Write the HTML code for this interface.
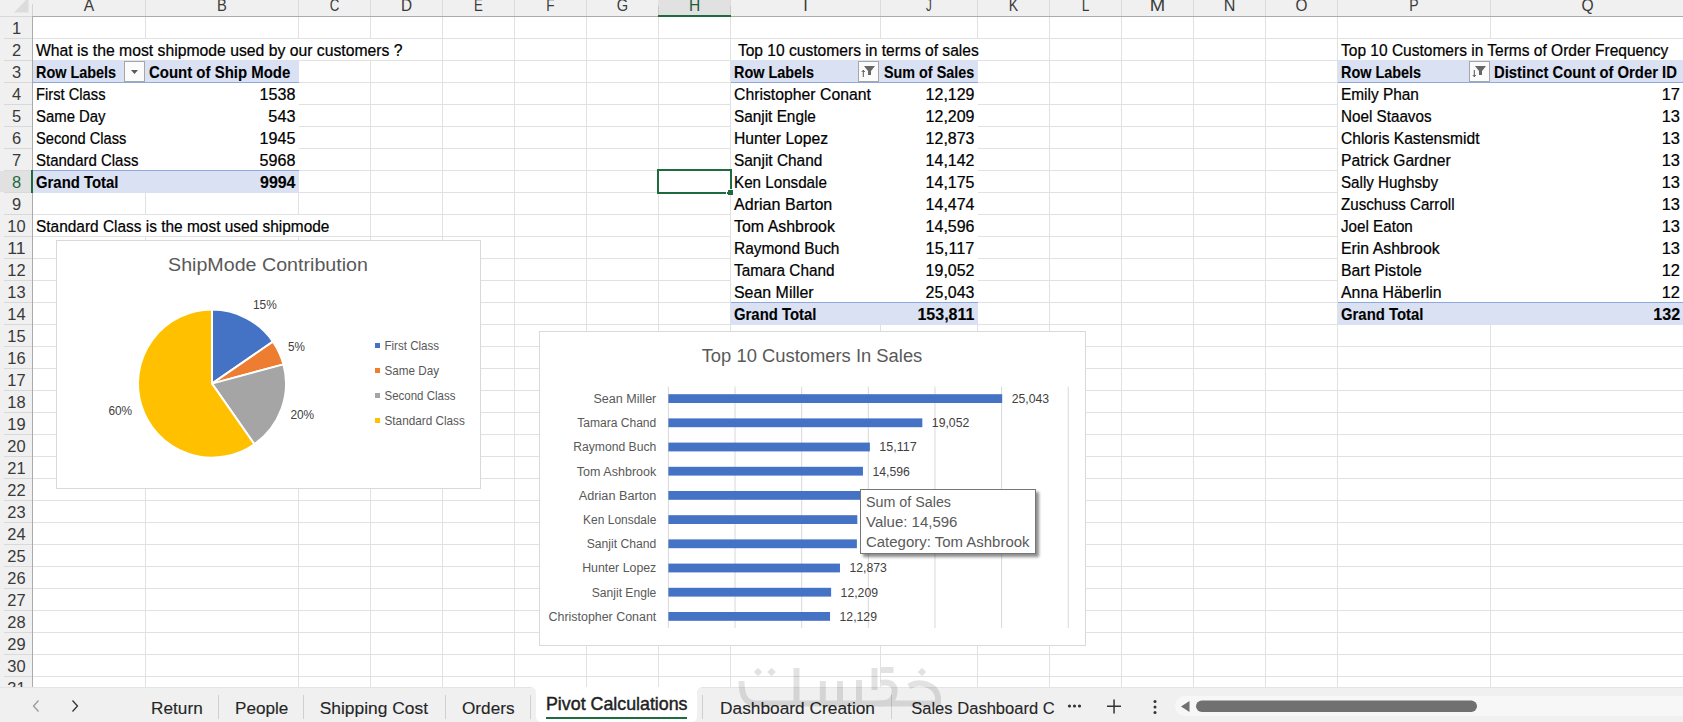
<!DOCTYPE html>
<html><head><meta charset="utf-8"><title>Pivot Calculations</title>
<style>html,body{margin:0;padding:0;width:1683px;height:722px;overflow:hidden;background:#fff;font-family:"Liberation Sans",sans-serif}</style>
</head><body><svg width="1683" height="722" viewBox="0 0 1683 722" style="display:block" font-family="Liberation Sans, sans-serif" xml:space="preserve"><rect x="0" y="0" width="1683" height="722" fill="#fff" /><rect x="145" y="17" width="1" height="670" fill="#e1e1e1" /><rect x="298" y="17" width="1" height="670" fill="#e1e1e1" /><rect x="370" y="17" width="1" height="670" fill="#e1e1e1" /><rect x="442" y="17" width="1" height="670" fill="#e1e1e1" /><rect x="514" y="17" width="1" height="670" fill="#e1e1e1" /><rect x="586" y="17" width="1" height="670" fill="#e1e1e1" /><rect x="658" y="17" width="1" height="670" fill="#e1e1e1" /><rect x="730" y="17" width="1" height="670" fill="#e1e1e1" /><rect x="880" y="17" width="1" height="670" fill="#e1e1e1" /><rect x="977" y="17" width="1" height="670" fill="#e1e1e1" /><rect x="1049" y="17" width="1" height="670" fill="#e1e1e1" /><rect x="1121" y="17" width="1" height="670" fill="#e1e1e1" /><rect x="1193" y="17" width="1" height="670" fill="#e1e1e1" /><rect x="1265" y="17" width="1" height="670" fill="#e1e1e1" /><rect x="1337" y="17" width="1" height="670" fill="#e1e1e1" /><rect x="1490" y="17" width="1" height="670" fill="#e1e1e1" /><rect x="33" y="38" width="1650" height="1" fill="#e1e1e1" /><rect x="33" y="60" width="1650" height="1" fill="#e1e1e1" /><rect x="33" y="82" width="1650" height="1" fill="#e1e1e1" /><rect x="33" y="104" width="1650" height="1" fill="#e1e1e1" /><rect x="33" y="126" width="1650" height="1" fill="#e1e1e1" /><rect x="33" y="148" width="1650" height="1" fill="#e1e1e1" /><rect x="33" y="170" width="1650" height="1" fill="#e1e1e1" /><rect x="33" y="192" width="1650" height="1" fill="#e1e1e1" /><rect x="33" y="214" width="1650" height="1" fill="#e1e1e1" /><rect x="33" y="236" width="1650" height="1" fill="#e1e1e1" /><rect x="33" y="258" width="1650" height="1" fill="#e1e1e1" /><rect x="33" y="280" width="1650" height="1" fill="#e1e1e1" /><rect x="33" y="302" width="1650" height="1" fill="#e1e1e1" /><rect x="33" y="324" width="1650" height="1" fill="#e1e1e1" /><rect x="33" y="346" width="1650" height="1" fill="#e1e1e1" /><rect x="33" y="368" width="1650" height="1" fill="#e1e1e1" /><rect x="33" y="390" width="1650" height="1" fill="#e1e1e1" /><rect x="33" y="412" width="1650" height="1" fill="#e1e1e1" /><rect x="33" y="434" width="1650" height="1" fill="#e1e1e1" /><rect x="33" y="456" width="1650" height="1" fill="#e1e1e1" /><rect x="33" y="478" width="1650" height="1" fill="#e1e1e1" /><rect x="33" y="500" width="1650" height="1" fill="#e1e1e1" /><rect x="33" y="522" width="1650" height="1" fill="#e1e1e1" /><rect x="33" y="544" width="1650" height="1" fill="#e1e1e1" /><rect x="33" y="566" width="1650" height="1" fill="#e1e1e1" /><rect x="33" y="588" width="1650" height="1" fill="#e1e1e1" /><rect x="33" y="610" width="1650" height="1" fill="#e1e1e1" /><rect x="33" y="632" width="1650" height="1" fill="#e1e1e1" /><rect x="33" y="654" width="1650" height="1" fill="#e1e1e1" /><rect x="33" y="676" width="1650" height="1" fill="#e1e1e1" /><rect x="33" y="39" width="409" height="21" fill="#fff" /><rect x="731" y="39" width="318" height="21" fill="#fff" /><rect x="1338" y="39" width="345" height="21" fill="#fff" /><rect x="33" y="215" width="337" height="21" fill="#fff" /><rect x="33" y="60" width="266" height="22" fill="#d9e1f2" /><rect x="33" y="82" width="266" height="1" fill="#8ea9db" /><rect x="33" y="83" width="266" height="87" fill="#fff" /><rect x="33" y="170" width="266" height="1" fill="#8ea9db" /><rect x="33" y="171" width="266" height="22" fill="#d9e1f2" /><rect x="731" y="60" width="247" height="22" fill="#d9e1f2" /><rect x="731" y="82" width="247" height="1" fill="#8ea9db" /><rect x="731" y="83" width="247" height="219" fill="#fff" /><rect x="731" y="302" width="247" height="1" fill="#8ea9db" /><rect x="731" y="303" width="247" height="22" fill="#d9e1f2" /><rect x="1338" y="60" width="345" height="22" fill="#d9e1f2" /><rect x="1338" y="82" width="345" height="1" fill="#8ea9db" /><rect x="1338" y="83" width="345" height="219" fill="#fff" /><rect x="1338" y="302" width="345" height="1" fill="#8ea9db" /><rect x="1338" y="303" width="345" height="22" fill="#d9e1f2" /><rect x="0" y="0" width="1683" height="16" fill="#f0f0f0" /><rect x="0" y="17" width="32" height="670" fill="#f0f0f0" /><rect x="145" y="0" width="1" height="16" fill="#dcdcdc" /><rect x="298" y="0" width="1" height="16" fill="#dcdcdc" /><rect x="370" y="0" width="1" height="16" fill="#dcdcdc" /><rect x="442" y="0" width="1" height="16" fill="#dcdcdc" /><rect x="514" y="0" width="1" height="16" fill="#dcdcdc" /><rect x="586" y="0" width="1" height="16" fill="#dcdcdc" /><rect x="658" y="0" width="1" height="16" fill="#dcdcdc" /><rect x="730" y="0" width="1" height="16" fill="#dcdcdc" /><rect x="880" y="0" width="1" height="16" fill="#dcdcdc" /><rect x="977" y="0" width="1" height="16" fill="#dcdcdc" /><rect x="1049" y="0" width="1" height="16" fill="#dcdcdc" /><rect x="1121" y="0" width="1" height="16" fill="#dcdcdc" /><rect x="1193" y="0" width="1" height="16" fill="#dcdcdc" /><rect x="1265" y="0" width="1" height="16" fill="#dcdcdc" /><rect x="1337" y="0" width="1" height="16" fill="#dcdcdc" /><rect x="1490" y="0" width="1" height="16" fill="#dcdcdc" /><rect x="658" y="0" width="72" height="15" fill="#e1e1e1" /><rect x="32" y="4" width="1" height="12" fill="#d4d4d4" /><rect x="658" y="6" width="1" height="10" fill="#c8c8c8" /><rect x="730" y="6" width="1" height="10" fill="#c8c8c8" /><rect x="32" y="16" width="1651" height="1" fill="#ababab" /><rect x="0" y="16" width="32" height="1" fill="#d8d8d8" /><rect x="33" y="15" width="0" height="0" fill="#000" /><rect x="658" y="15" width="73" height="2" fill="#1d6b3e" /><rect x="4" y="38" width="28" height="1" fill="#d9d9d9" /><rect x="4" y="60" width="28" height="1" fill="#d9d9d9" /><rect x="4" y="82" width="28" height="1" fill="#d9d9d9" /><rect x="4" y="104" width="28" height="1" fill="#d9d9d9" /><rect x="4" y="126" width="28" height="1" fill="#d9d9d9" /><rect x="4" y="148" width="28" height="1" fill="#d9d9d9" /><rect x="4" y="170" width="28" height="1" fill="#d9d9d9" /><rect x="4" y="192" width="28" height="1" fill="#d9d9d9" /><rect x="4" y="214" width="28" height="1" fill="#d9d9d9" /><rect x="4" y="236" width="28" height="1" fill="#d9d9d9" /><rect x="4" y="258" width="28" height="1" fill="#d9d9d9" /><rect x="4" y="280" width="28" height="1" fill="#d9d9d9" /><rect x="4" y="302" width="28" height="1" fill="#d9d9d9" /><rect x="4" y="324" width="28" height="1" fill="#d9d9d9" /><rect x="4" y="346" width="28" height="1" fill="#d9d9d9" /><rect x="4" y="368" width="28" height="1" fill="#d9d9d9" /><rect x="4" y="390" width="28" height="1" fill="#d9d9d9" /><rect x="4" y="412" width="28" height="1" fill="#d9d9d9" /><rect x="4" y="434" width="28" height="1" fill="#d9d9d9" /><rect x="4" y="456" width="28" height="1" fill="#d9d9d9" /><rect x="4" y="478" width="28" height="1" fill="#d9d9d9" /><rect x="4" y="500" width="28" height="1" fill="#d9d9d9" /><rect x="4" y="522" width="28" height="1" fill="#d9d9d9" /><rect x="4" y="544" width="28" height="1" fill="#d9d9d9" /><rect x="4" y="566" width="28" height="1" fill="#d9d9d9" /><rect x="4" y="588" width="28" height="1" fill="#d9d9d9" /><rect x="4" y="610" width="28" height="1" fill="#d9d9d9" /><rect x="4" y="632" width="28" height="1" fill="#d9d9d9" /><rect x="4" y="654" width="28" height="1" fill="#d9d9d9" /><rect x="4" y="676" width="28" height="1" fill="#d9d9d9" /><rect x="0" y="171" width="31" height="21" fill="#e1e1e1" /><rect x="32" y="0" width="1" height="0" fill="#000" /><rect x="32" y="17" width="1" height="670" fill="#ababab" /><rect x="31" y="170" width="2" height="23" fill="#1d6b3e" /><polygon points="14,12.5 28.5,12.5 28.5,0 26,0" fill="#dcdcdc"/><text x="89.00" y="11.00" font-size="15.82" fill="#3a3a3a"  text-anchor="middle" textLength="10.45" lengthAdjust="spacingAndGlyphs">A</text><text x="222.00" y="11.00" font-size="15.82" fill="#3a3a3a"  text-anchor="middle" textLength="9.83" lengthAdjust="spacingAndGlyphs">B</text><text x="334.50" y="11.00" font-size="15.82" fill="#3a3a3a"  text-anchor="middle" textLength="9.63" lengthAdjust="spacingAndGlyphs">C</text><text x="406.50" y="11.00" font-size="15.82" fill="#3a3a3a"  text-anchor="middle" textLength="11.11" lengthAdjust="spacingAndGlyphs">D</text><text x="478.50" y="11.00" font-size="15.82" fill="#3a3a3a"  text-anchor="middle" textLength="8.83" lengthAdjust="spacingAndGlyphs">E</text><text x="550.50" y="11.00" font-size="15.82" fill="#3a3a3a"  text-anchor="middle" textLength="8.30" lengthAdjust="spacingAndGlyphs">F</text><text x="622.50" y="11.00" font-size="15.82" fill="#3a3a3a"  text-anchor="middle" textLength="11.39" lengthAdjust="spacingAndGlyphs">G</text><text x="694.50" y="11.00" font-size="15.82" fill="#215a3a"  text-anchor="middle" textLength="11.25" lengthAdjust="spacingAndGlyphs">H</text><text x="805.50" y="11.00" font-size="15.82" fill="#3a3a3a"  text-anchor="middle" textLength="4.56" lengthAdjust="spacingAndGlyphs">I</text><text x="929.00" y="11.00" font-size="15.82" fill="#3a3a3a"  text-anchor="middle" textLength="5.76" lengthAdjust="spacingAndGlyphs">J</text><text x="1013.50" y="11.00" font-size="15.82" fill="#3a3a3a"  text-anchor="middle" textLength="9.38" lengthAdjust="spacingAndGlyphs">K</text><text x="1085.50" y="11.00" font-size="15.82" fill="#3a3a3a"  text-anchor="middle" textLength="7.60" lengthAdjust="spacingAndGlyphs">L</text><text x="1157.50" y="11.00" font-size="15.82" fill="#3a3a3a"  text-anchor="middle" textLength="15.44" lengthAdjust="spacingAndGlyphs">M</text><text x="1229.50" y="11.00" font-size="15.82" fill="#3a3a3a"  text-anchor="middle" textLength="11.66" lengthAdjust="spacingAndGlyphs">N</text><text x="1301.50" y="11.00" font-size="15.82" fill="#3a3a3a"  text-anchor="middle" textLength="11.96" lengthAdjust="spacingAndGlyphs">O</text><text x="1414.00" y="11.00" font-size="15.82" fill="#3a3a3a"  text-anchor="middle" textLength="9.34" lengthAdjust="spacingAndGlyphs">P</text><text x="1587.50" y="11.00" font-size="15.82" fill="#3a3a3a"  text-anchor="middle" textLength="12.16" lengthAdjust="spacingAndGlyphs">Q</text><text x="16.50" y="34.00" font-size="15.82" fill="#3a3a3a"  text-anchor="middle" textLength="9.15" lengthAdjust="spacingAndGlyphs">1</text><text x="16.50" y="56.00" font-size="15.82" fill="#3a3a3a"  text-anchor="middle" textLength="9.15" lengthAdjust="spacingAndGlyphs">2</text><text x="16.50" y="78.00" font-size="15.82" fill="#3a3a3a"  text-anchor="middle" textLength="9.15" lengthAdjust="spacingAndGlyphs">3</text><text x="16.50" y="100.00" font-size="15.82" fill="#3a3a3a"  text-anchor="middle" textLength="9.15" lengthAdjust="spacingAndGlyphs">4</text><text x="16.50" y="122.00" font-size="15.82" fill="#3a3a3a"  text-anchor="middle" textLength="9.15" lengthAdjust="spacingAndGlyphs">5</text><text x="16.50" y="144.00" font-size="15.82" fill="#3a3a3a"  text-anchor="middle" textLength="9.15" lengthAdjust="spacingAndGlyphs">6</text><text x="16.50" y="166.00" font-size="15.82" fill="#3a3a3a"  text-anchor="middle" textLength="9.15" lengthAdjust="spacingAndGlyphs">7</text><text x="16.50" y="188.00" font-size="15.82" fill="#1f6a3e"  text-anchor="middle" textLength="9.15" lengthAdjust="spacingAndGlyphs">8</text><text x="16.50" y="210.00" font-size="15.82" fill="#3a3a3a"  text-anchor="middle" textLength="9.15" lengthAdjust="spacingAndGlyphs">9</text><text x="16.50" y="232.00" font-size="15.82" fill="#3a3a3a"  text-anchor="middle" textLength="18.31" lengthAdjust="spacingAndGlyphs">10</text><text x="16.50" y="254.00" font-size="15.82" fill="#3a3a3a"  text-anchor="middle" textLength="18.31" lengthAdjust="spacingAndGlyphs">11</text><text x="16.50" y="276.00" font-size="15.82" fill="#3a3a3a"  text-anchor="middle" textLength="18.31" lengthAdjust="spacingAndGlyphs">12</text><text x="16.50" y="298.00" font-size="15.82" fill="#3a3a3a"  text-anchor="middle" textLength="18.31" lengthAdjust="spacingAndGlyphs">13</text><text x="16.50" y="320.00" font-size="15.82" fill="#3a3a3a"  text-anchor="middle" textLength="18.31" lengthAdjust="spacingAndGlyphs">14</text><text x="16.50" y="342.00" font-size="15.82" fill="#3a3a3a"  text-anchor="middle" textLength="18.31" lengthAdjust="spacingAndGlyphs">15</text><text x="16.50" y="364.00" font-size="15.82" fill="#3a3a3a"  text-anchor="middle" textLength="18.31" lengthAdjust="spacingAndGlyphs">16</text><text x="16.50" y="386.00" font-size="15.82" fill="#3a3a3a"  text-anchor="middle" textLength="18.31" lengthAdjust="spacingAndGlyphs">17</text><text x="16.50" y="408.00" font-size="15.82" fill="#3a3a3a"  text-anchor="middle" textLength="18.31" lengthAdjust="spacingAndGlyphs">18</text><text x="16.50" y="430.00" font-size="15.82" fill="#3a3a3a"  text-anchor="middle" textLength="18.31" lengthAdjust="spacingAndGlyphs">19</text><text x="16.50" y="452.00" font-size="15.82" fill="#3a3a3a"  text-anchor="middle" textLength="18.31" lengthAdjust="spacingAndGlyphs">20</text><text x="16.50" y="474.00" font-size="15.82" fill="#3a3a3a"  text-anchor="middle" textLength="18.31" lengthAdjust="spacingAndGlyphs">21</text><text x="16.50" y="496.00" font-size="15.82" fill="#3a3a3a"  text-anchor="middle" textLength="18.31" lengthAdjust="spacingAndGlyphs">22</text><text x="16.50" y="518.00" font-size="15.82" fill="#3a3a3a"  text-anchor="middle" textLength="18.31" lengthAdjust="spacingAndGlyphs">23</text><text x="16.50" y="540.00" font-size="15.82" fill="#3a3a3a"  text-anchor="middle" textLength="18.31" lengthAdjust="spacingAndGlyphs">24</text><text x="16.50" y="562.00" font-size="15.82" fill="#3a3a3a"  text-anchor="middle" textLength="18.31" lengthAdjust="spacingAndGlyphs">25</text><text x="16.50" y="584.00" font-size="15.82" fill="#3a3a3a"  text-anchor="middle" textLength="18.31" lengthAdjust="spacingAndGlyphs">26</text><text x="16.50" y="606.00" font-size="15.82" fill="#3a3a3a"  text-anchor="middle" textLength="18.31" lengthAdjust="spacingAndGlyphs">27</text><text x="16.50" y="628.00" font-size="15.82" fill="#3a3a3a"  text-anchor="middle" textLength="18.31" lengthAdjust="spacingAndGlyphs">28</text><text x="16.50" y="650.00" font-size="15.82" fill="#3a3a3a"  text-anchor="middle" textLength="18.31" lengthAdjust="spacingAndGlyphs">29</text><text x="16.50" y="672.00" font-size="15.82" fill="#3a3a3a"  text-anchor="middle" textLength="18.31" lengthAdjust="spacingAndGlyphs">30</text><text x="16.50" y="694.00" font-size="15.82" fill="#3a3a3a"  text-anchor="middle" textLength="18.31" lengthAdjust="spacingAndGlyphs">31</text><text x="36.00" y="56.00" font-size="15.82" fill="#000"  stroke="#000" stroke-width="0.22" textLength="366.61" lengthAdjust="spacingAndGlyphs">What is the most shipmode used by our customers ?</text><text x="737.90" y="56.00" font-size="15.82" fill="#000"  stroke="#000" stroke-width="0.22" textLength="240.89" lengthAdjust="spacingAndGlyphs">Top 10 customers in terms of sales</text><text x="1341.00" y="56.00" font-size="15.82" fill="#000"  stroke="#000" stroke-width="0.22" textLength="327.39" lengthAdjust="spacingAndGlyphs">Top 10 Customers in Terms of Order Frequency</text><text x="36.00" y="232.00" font-size="15.82" fill="#000"  stroke="#000" stroke-width="0.22" textLength="293.39" lengthAdjust="spacingAndGlyphs">Standard Class is the most used shipmode</text><text x="36.00" y="78.00" font-size="15.64" font-weight="bold" fill="#000"  stroke="#000" stroke-width="0.1" textLength="80.11" lengthAdjust="spacingAndGlyphs">Row Labels</text><text x="149.00" y="78.00" font-size="15.64" font-weight="bold" fill="#000"  stroke="#000" stroke-width="0.1" textLength="141.31" lengthAdjust="spacingAndGlyphs">Count of Ship Mode</text><text x="36.00" y="100.00" font-size="15.82" fill="#000"  stroke="#000" stroke-width="0.22" textLength="69.50" lengthAdjust="spacingAndGlyphs">First Class</text><text x="295.50" y="100.00" font-size="15.82" fill="#000"  stroke="#000" stroke-width="0.22" text-anchor="end" textLength="35.86" lengthAdjust="spacingAndGlyphs">1538</text><text x="36.00" y="122.00" font-size="15.82" fill="#000"  stroke="#000" stroke-width="0.22" textLength="69.58" lengthAdjust="spacingAndGlyphs">Same Day</text><text x="295.50" y="122.00" font-size="15.82" fill="#000"  stroke="#000" stroke-width="0.22" text-anchor="end" textLength="27.14" lengthAdjust="spacingAndGlyphs">543</text><text x="36.00" y="144.00" font-size="15.82" fill="#000"  stroke="#000" stroke-width="0.22" textLength="90.38" lengthAdjust="spacingAndGlyphs">Second Class</text><text x="295.50" y="144.00" font-size="15.82" fill="#000"  stroke="#000" stroke-width="0.22" text-anchor="end" textLength="35.86" lengthAdjust="spacingAndGlyphs">1945</text><text x="36.00" y="166.00" font-size="15.82" fill="#000"  stroke="#000" stroke-width="0.22" textLength="102.44" lengthAdjust="spacingAndGlyphs">Standard Class</text><text x="295.50" y="166.00" font-size="15.82" fill="#000"  stroke="#000" stroke-width="0.22" text-anchor="end" textLength="35.86" lengthAdjust="spacingAndGlyphs">5968</text><text x="36.00" y="188.00" font-size="15.64" font-weight="bold" fill="#000"  stroke="#000" stroke-width="0.1" textLength="82.38" lengthAdjust="spacingAndGlyphs">Grand Total</text><text x="295.50" y="188.00" font-size="15.64" font-weight="bold" fill="#000"  stroke="#000" stroke-width="0.1" text-anchor="end" textLength="35.47" lengthAdjust="spacingAndGlyphs">9994</text><text x="734.00" y="78.00" font-size="15.64" font-weight="bold" fill="#000"  stroke="#000" stroke-width="0.1" textLength="80.11" lengthAdjust="spacingAndGlyphs">Row Labels</text><text x="884.00" y="78.00" font-size="15.64" font-weight="bold" fill="#000"  stroke="#000" stroke-width="0.1" textLength="90.14" lengthAdjust="spacingAndGlyphs">Sum of Sales</text><text x="734.00" y="100.00" font-size="15.82" fill="#000"  stroke="#000" stroke-width="0.22" textLength="136.92" lengthAdjust="spacingAndGlyphs">Christopher Conant</text><text x="974.50" y="100.00" font-size="15.82" fill="#000"  stroke="#000" stroke-width="0.22" text-anchor="end" textLength="48.86" lengthAdjust="spacingAndGlyphs">12,129</text><text x="734.00" y="122.00" font-size="15.82" fill="#000"  stroke="#000" stroke-width="0.22" textLength="81.88" lengthAdjust="spacingAndGlyphs">Sanjit Engle</text><text x="974.50" y="122.00" font-size="15.82" fill="#000"  stroke="#000" stroke-width="0.22" text-anchor="end" textLength="48.86" lengthAdjust="spacingAndGlyphs">12,209</text><text x="734.00" y="144.00" font-size="15.82" fill="#000"  stroke="#000" stroke-width="0.22" textLength="94.11" lengthAdjust="spacingAndGlyphs">Hunter Lopez</text><text x="974.50" y="144.00" font-size="15.82" fill="#000"  stroke="#000" stroke-width="0.22" text-anchor="end" textLength="48.86" lengthAdjust="spacingAndGlyphs">12,873</text><text x="734.00" y="166.00" font-size="15.82" fill="#000"  stroke="#000" stroke-width="0.22" textLength="88.36" lengthAdjust="spacingAndGlyphs">Sanjit Chand</text><text x="974.50" y="166.00" font-size="15.82" fill="#000"  stroke="#000" stroke-width="0.22" text-anchor="end" textLength="48.86" lengthAdjust="spacingAndGlyphs">14,142</text><text x="734.00" y="188.00" font-size="15.82" fill="#000"  stroke="#000" stroke-width="0.22" textLength="92.89" lengthAdjust="spacingAndGlyphs">Ken Lonsdale</text><text x="974.50" y="188.00" font-size="15.82" fill="#000"  stroke="#000" stroke-width="0.22" text-anchor="end" textLength="48.86" lengthAdjust="spacingAndGlyphs">14,175</text><text x="734.00" y="210.00" font-size="15.82" fill="#000"  stroke="#000" stroke-width="0.22" textLength="98.33" lengthAdjust="spacingAndGlyphs">Adrian Barton</text><text x="974.50" y="210.00" font-size="15.82" fill="#000"  stroke="#000" stroke-width="0.22" text-anchor="end" textLength="48.86" lengthAdjust="spacingAndGlyphs">14,474</text><text x="734.00" y="232.00" font-size="15.82" fill="#000"  stroke="#000" stroke-width="0.22" textLength="100.92" lengthAdjust="spacingAndGlyphs">Tom Ashbrook</text><text x="974.50" y="232.00" font-size="15.82" fill="#000"  stroke="#000" stroke-width="0.22" text-anchor="end" textLength="48.86" lengthAdjust="spacingAndGlyphs">14,596</text><text x="734.00" y="254.00" font-size="15.82" fill="#000"  stroke="#000" stroke-width="0.22" textLength="105.45" lengthAdjust="spacingAndGlyphs">Raymond Buch</text><text x="974.50" y="254.00" font-size="15.82" fill="#000"  stroke="#000" stroke-width="0.22" text-anchor="end" textLength="48.86" lengthAdjust="spacingAndGlyphs">15,117</text><text x="734.00" y="276.00" font-size="15.82" fill="#000"  stroke="#000" stroke-width="0.22" textLength="100.48" lengthAdjust="spacingAndGlyphs">Tamara Chand</text><text x="974.50" y="276.00" font-size="15.82" fill="#000"  stroke="#000" stroke-width="0.22" text-anchor="end" textLength="48.86" lengthAdjust="spacingAndGlyphs">19,052</text><text x="734.00" y="298.00" font-size="15.82" fill="#000"  stroke="#000" stroke-width="0.22" textLength="79.67" lengthAdjust="spacingAndGlyphs">Sean Miller</text><text x="974.50" y="298.00" font-size="15.82" fill="#000"  stroke="#000" stroke-width="0.22" text-anchor="end" textLength="48.86" lengthAdjust="spacingAndGlyphs">25,043</text><text x="734.00" y="320.00" font-size="15.64" font-weight="bold" fill="#000"  stroke="#000" stroke-width="0.1" textLength="82.38" lengthAdjust="spacingAndGlyphs">Grand Total</text><text x="974.50" y="320.00" font-size="15.64" font-weight="bold" fill="#000"  stroke="#000" stroke-width="0.1" text-anchor="end" textLength="57.09" lengthAdjust="spacingAndGlyphs">153,811</text><text x="1341.00" y="78.00" font-size="15.64" font-weight="bold" fill="#000"  stroke="#000" stroke-width="0.1" textLength="80.11" lengthAdjust="spacingAndGlyphs">Row Labels</text><text x="1494.00" y="78.00" font-size="15.64" font-weight="bold" fill="#000"  stroke="#000" stroke-width="0.1" textLength="182.89" lengthAdjust="spacingAndGlyphs">Distinct Count of Order ID</text><text x="1341.00" y="100.00" font-size="15.82" fill="#000"  stroke="#000" stroke-width="0.22" textLength="77.86" lengthAdjust="spacingAndGlyphs">Emily Phan</text><text x="1680.04" y="100.00" font-size="15.82" fill="#000"  stroke="#000" stroke-width="0.22" text-anchor="end" textLength="18.31" lengthAdjust="spacingAndGlyphs">17</text><text x="1341.00" y="122.00" font-size="15.82" fill="#000"  stroke="#000" stroke-width="0.22" textLength="90.56" lengthAdjust="spacingAndGlyphs">Noel Staavos</text><text x="1680.04" y="122.00" font-size="15.82" fill="#000"  stroke="#000" stroke-width="0.22" text-anchor="end" textLength="18.31" lengthAdjust="spacingAndGlyphs">13</text><text x="1341.00" y="144.00" font-size="15.82" fill="#000"  stroke="#000" stroke-width="0.22" textLength="138.50" lengthAdjust="spacingAndGlyphs">Chloris Kastensmidt</text><text x="1680.04" y="144.00" font-size="15.82" fill="#000"  stroke="#000" stroke-width="0.22" text-anchor="end" textLength="18.31" lengthAdjust="spacingAndGlyphs">13</text><text x="1341.00" y="166.00" font-size="15.82" fill="#000"  stroke="#000" stroke-width="0.22" textLength="109.69" lengthAdjust="spacingAndGlyphs">Patrick Gardner</text><text x="1680.04" y="166.00" font-size="15.82" fill="#000"  stroke="#000" stroke-width="0.22" text-anchor="end" textLength="18.31" lengthAdjust="spacingAndGlyphs">13</text><text x="1341.00" y="188.00" font-size="15.82" fill="#000"  stroke="#000" stroke-width="0.22" textLength="97.00" lengthAdjust="spacingAndGlyphs">Sally Hughsby</text><text x="1680.04" y="188.00" font-size="15.82" fill="#000"  stroke="#000" stroke-width="0.22" text-anchor="end" textLength="18.31" lengthAdjust="spacingAndGlyphs">13</text><text x="1341.00" y="210.00" font-size="15.82" fill="#000"  stroke="#000" stroke-width="0.22" textLength="113.53" lengthAdjust="spacingAndGlyphs">Zuschuss Carroll</text><text x="1680.04" y="210.00" font-size="15.82" fill="#000"  stroke="#000" stroke-width="0.22" text-anchor="end" textLength="18.31" lengthAdjust="spacingAndGlyphs">13</text><text x="1341.00" y="232.00" font-size="15.82" fill="#000"  stroke="#000" stroke-width="0.22" textLength="71.80" lengthAdjust="spacingAndGlyphs">Joel Eaton</text><text x="1680.04" y="232.00" font-size="15.82" fill="#000"  stroke="#000" stroke-width="0.22" text-anchor="end" textLength="18.31" lengthAdjust="spacingAndGlyphs">13</text><text x="1341.00" y="254.00" font-size="15.82" fill="#000"  stroke="#000" stroke-width="0.22" textLength="98.64" lengthAdjust="spacingAndGlyphs">Erin Ashbrook</text><text x="1680.04" y="254.00" font-size="15.82" fill="#000"  stroke="#000" stroke-width="0.22" text-anchor="end" textLength="18.31" lengthAdjust="spacingAndGlyphs">13</text><text x="1341.00" y="276.00" font-size="15.82" fill="#000"  stroke="#000" stroke-width="0.22" textLength="80.72" lengthAdjust="spacingAndGlyphs">Bart Pistole</text><text x="1680.04" y="276.00" font-size="15.82" fill="#000"  stroke="#000" stroke-width="0.22" text-anchor="end" textLength="18.31" lengthAdjust="spacingAndGlyphs">12</text><text x="1341.00" y="298.00" font-size="15.82" fill="#000"  stroke="#000" stroke-width="0.22" textLength="100.56" lengthAdjust="spacingAndGlyphs">Anna Häberlin</text><text x="1680.04" y="298.00" font-size="15.82" fill="#000"  stroke="#000" stroke-width="0.22" text-anchor="end" textLength="18.31" lengthAdjust="spacingAndGlyphs">12</text><text x="1341.00" y="320.00" font-size="15.64" font-weight="bold" fill="#000"  stroke="#000" stroke-width="0.1" textLength="82.38" lengthAdjust="spacingAndGlyphs">Grand Total</text><text x="1680.10" y="320.00" font-size="15.64" font-weight="bold" fill="#000"  stroke="#000" stroke-width="0.1" text-anchor="end" textLength="26.86" lengthAdjust="spacingAndGlyphs">132</text><rect x="124.5" y="61.5" width="20" height="20" fill="#fbfbfb" stroke="#a6a6a6" stroke-width="1"/><polygon points="131,70 138,70 134.5,74" fill="#595959"/><rect x="858.5" y="61.5" width="20" height="20" fill="#fbfbfb" stroke="#a6a6a6" stroke-width="1"/><polygon points="864,66 875,66 871,71 871,75 868,75 868,71" fill="#666"/><path d="M863.3 77 V70.5" stroke="#444" stroke-width="0.9"/><path d="M861.8 72 L863.3 70.3 L864.8 72" stroke="#444" stroke-width="0.9" fill="none"/><rect x="1469.5" y="61.5" width="20" height="20" fill="#fbfbfb" stroke="#a6a6a6" stroke-width="1"/><polygon points="1475,66 1486,66 1482,71 1482,75 1479,75 1479,71" fill="#666"/><path d="M1474.3 70 V76.5" stroke="#444" stroke-width="0.9"/><path d="M1472.8 75 L1474.3 76.7 L1475.8 75" stroke="#444" stroke-width="0.9" fill="none"/><rect x="658" y="170" width="73" height="23" fill="none" stroke="#1d6b3e" stroke-width="2"/><rect x="728" y="190" width="5" height="5" fill="#1d6b3e" /><rect x="726" y="189" width="7" height="1" fill="#fff" /><rect x="726" y="189" width="1" height="7" fill="#fff" /><rect x="56.5" y="240.5" width="424" height="248" fill="#fff" stroke="#d9d9d9" stroke-width="1"/><text x="268.00" y="271.00" font-size="19.23" fill="#595959"  text-anchor="middle" textLength="199.92" lengthAdjust="spacingAndGlyphs">ShipMode Contribution</text><path d="M212,383.6 L212.00,309.60 A74,74 0 0 1 272.91,341.58 Z" fill="#4472c4" stroke="#fff" stroke-width="2" stroke-linejoin="round"/><path d="M212,383.6 L272.91,341.58 A74,74 0 0 1 283.47,364.40 Z" fill="#ed7d31" stroke="#fff" stroke-width="2" stroke-linejoin="round"/><path d="M212,383.6 L283.47,364.40 A74,74 0 0 1 254.42,444.23 Z" fill="#a5a5a5" stroke="#fff" stroke-width="2" stroke-linejoin="round"/><path d="M212,383.6 L254.42,444.23 A74,74 0 1 1 212.00,309.60 Z" fill="#ffc000" stroke="#fff" stroke-width="2" stroke-linejoin="round"/><text x="253.00" y="308.70" font-size="12.14" fill="#404040"  textLength="23.80" lengthAdjust="spacingAndGlyphs">15%</text><text x="287.90" y="350.80" font-size="12.14" fill="#404040"  textLength="16.93" lengthAdjust="spacingAndGlyphs">5%</text><text x="290.40" y="419.00" font-size="12.14" fill="#404040"  textLength="23.80" lengthAdjust="spacingAndGlyphs">20%</text><text x="108.40" y="414.90" font-size="12.14" fill="#404040"  textLength="23.80" lengthAdjust="spacingAndGlyphs">60%</text><rect x="375" y="343" width="5" height="5" fill="#4472c4" /><text x="384.50" y="349.60" font-size="12.37" fill="#595959"  textLength="54.56" lengthAdjust="spacingAndGlyphs">First Class</text><rect x="375" y="368" width="5" height="5" fill="#ed7d31" /><text x="384.50" y="374.70" font-size="12.37" fill="#595959"  textLength="54.61" lengthAdjust="spacingAndGlyphs">Same Day</text><rect x="375" y="393" width="5" height="5" fill="#a5a5a5" /><text x="384.50" y="399.80" font-size="12.37" fill="#595959"  textLength="70.88" lengthAdjust="spacingAndGlyphs">Second Class</text><rect x="375" y="418" width="5" height="5" fill="#ffc000" /><text x="384.50" y="424.90" font-size="12.37" fill="#595959"  textLength="80.31" lengthAdjust="spacingAndGlyphs">Standard Class</text><rect x="539.5" y="331.5" width="546" height="314" fill="#fff" stroke="#d9d9d9" stroke-width="1"/><text x="812.00" y="362.00" font-size="19.23" fill="#595959"  text-anchor="middle" textLength="220.64" lengthAdjust="spacingAndGlyphs">Top 10 Customers In Sales</text><rect x="667.90" y="386.5" width="1" height="241.5" fill="#d9d9d9"/><rect x="734.54" y="386.5" width="1" height="241.5" fill="#d9d9d9"/><rect x="801.18" y="386.5" width="1" height="241.5" fill="#d9d9d9"/><rect x="867.82" y="386.5" width="1" height="241.5" fill="#d9d9d9"/><rect x="934.46" y="386.5" width="1" height="241.5" fill="#d9d9d9"/><rect x="1001.10" y="386.5" width="1" height="241.5" fill="#d9d9d9"/><rect x="1067.74" y="386.5" width="1" height="241.5" fill="#d9d9d9"/><rect x="668.40" y="394.20" width="333.77" height="8.8" fill="#4472c4"/><text x="656.30" y="402.90" font-size="12.42" fill="#595959"  text-anchor="end" textLength="62.80" lengthAdjust="spacingAndGlyphs">Sean Miller</text><text x="1011.67" y="403.00" font-size="12.05" fill="#404040"  textLength="37.45" lengthAdjust="spacingAndGlyphs">25,043</text><rect x="668.40" y="418.40" width="253.93" height="8.8" fill="#4472c4"/><text x="656.30" y="427.10" font-size="12.42" fill="#595959"  text-anchor="end" textLength="79.14" lengthAdjust="spacingAndGlyphs">Tamara Chand</text><text x="931.83" y="427.20" font-size="12.05" fill="#404040"  textLength="37.45" lengthAdjust="spacingAndGlyphs">19,052</text><rect x="668.40" y="442.60" width="201.48" height="8.8" fill="#4472c4"/><text x="656.30" y="451.30" font-size="12.42" fill="#595959"  text-anchor="end" textLength="83.05" lengthAdjust="spacingAndGlyphs">Raymond Buch</text><text x="879.38" y="451.40" font-size="12.05" fill="#404040"  textLength="37.45" lengthAdjust="spacingAndGlyphs">15,117</text><rect x="668.40" y="466.80" width="194.54" height="8.8" fill="#4472c4"/><text x="656.30" y="475.50" font-size="12.42" fill="#595959"  text-anchor="end" textLength="79.48" lengthAdjust="spacingAndGlyphs">Tom Ashbrook</text><text x="872.44" y="475.60" font-size="12.05" fill="#404040"  textLength="37.45" lengthAdjust="spacingAndGlyphs">14,596</text><rect x="668.40" y="491.00" width="192.91" height="8.8" fill="#4472c4"/><text x="656.30" y="499.70" font-size="12.42" fill="#595959"  text-anchor="end" textLength="77.45" lengthAdjust="spacingAndGlyphs">Adrian Barton</text><text x="870.81" y="499.80" font-size="12.05" fill="#404040"  textLength="37.45" lengthAdjust="spacingAndGlyphs">14,474</text><rect x="668.40" y="515.20" width="188.92" height="8.8" fill="#4472c4"/><text x="656.30" y="523.90" font-size="12.42" fill="#595959"  text-anchor="end" textLength="73.19" lengthAdjust="spacingAndGlyphs">Ken Lonsdale</text><text x="866.82" y="524.00" font-size="12.05" fill="#404040"  textLength="37.45" lengthAdjust="spacingAndGlyphs">14,175</text><rect x="668.40" y="539.40" width="188.48" height="8.8" fill="#4472c4"/><text x="656.30" y="548.10" font-size="12.42" fill="#595959"  text-anchor="end" textLength="69.61" lengthAdjust="spacingAndGlyphs">Sanjit Chand</text><text x="866.38" y="548.20" font-size="12.05" fill="#404040"  textLength="37.45" lengthAdjust="spacingAndGlyphs">14,142</text><rect x="668.40" y="563.60" width="171.57" height="8.8" fill="#4472c4"/><text x="656.30" y="572.30" font-size="12.42" fill="#595959"  text-anchor="end" textLength="74.14" lengthAdjust="spacingAndGlyphs">Hunter Lopez</text><text x="849.47" y="572.40" font-size="12.05" fill="#404040"  textLength="37.45" lengthAdjust="spacingAndGlyphs">12,873</text><rect x="668.40" y="587.80" width="162.72" height="8.8" fill="#4472c4"/><text x="656.30" y="596.50" font-size="12.42" fill="#595959"  text-anchor="end" textLength="64.53" lengthAdjust="spacingAndGlyphs">Sanjit Engle</text><text x="840.62" y="596.60" font-size="12.05" fill="#404040"  textLength="37.45" lengthAdjust="spacingAndGlyphs">12,209</text><rect x="668.40" y="612.00" width="161.66" height="8.8" fill="#4472c4"/><text x="656.30" y="620.70" font-size="12.42" fill="#595959"  text-anchor="end" textLength="107.77" lengthAdjust="spacingAndGlyphs">Christopher Conant</text><text x="839.56" y="620.80" font-size="12.05" fill="#404040"  textLength="37.45" lengthAdjust="spacingAndGlyphs">12,129</text><defs><filter id="sh" x="-10%" y="-10%" width="130%" height="140%"><feGaussianBlur in="SourceAlpha" stdDeviation="1.5"/><feOffset dx="3" dy="3"/><feComponentTransfer><feFuncA type="linear" slope="0.45"/></feComponentTransfer><feMerge><feMergeNode/><feMergeNode in="SourceGraphic"/></feMerge></filter></defs><rect x="860.5" y="489.5" width="175" height="64" fill="#fff" stroke="#767676" stroke-width="1" filter="url(#sh)"/><text x="866.00" y="506.80" font-size="15.09" fill="#5a5a5a"  textLength="85.02" lengthAdjust="spacingAndGlyphs">Sum of Sales</text><text x="866.00" y="526.80" font-size="15.09" fill="#5a5a5a"  textLength="91.48" lengthAdjust="spacingAndGlyphs">Value: 14,596</text><text x="866.00" y="546.80" font-size="15.09" fill="#5a5a5a"  textLength="163.50" lengthAdjust="spacingAndGlyphs">Category: Tom Ashbrook</text><rect x="0" y="687" width="1683" height="35" fill="#f0f0f0" /><rect x="0" y="687" width="1683" height="1" fill="#e4e4e4" /><path d="M530,687 Q536,687 536,693 V716 Q536,722 542,722 H691 Q697,722 697,716 V693 Q697,687 703,687 Z" fill="#fff"/><path d="M38.5,700.5 L33.5,706 L38.5,711.5" stroke="#9a9a9a" stroke-width="1.3" fill="none"/><path d="M72.5,700.5 L77.5,706 L72.5,711.5" stroke="#333" stroke-width="1.3" fill="none"/><rect x="218.0" y="695" width="1" height="24" fill="#d0d0d0" /><rect x="303.0" y="695" width="1" height="24" fill="#d0d0d0" /><rect x="445.0" y="695" width="1" height="24" fill="#d0d0d0" /><rect x="530.0" y="695" width="1" height="24" fill="#d0d0d0" /><rect x="702.0" y="695" width="1" height="24" fill="#d0d0d0" /><rect x="891.0" y="695" width="1" height="24" fill="#d0d0d0" /><text x="151.10" y="714.00" font-size="16.93" fill="#262626"  stroke="#262626" stroke-width="0.12" textLength="51.60" lengthAdjust="spacingAndGlyphs">Return</text><text x="235.00" y="714.00" font-size="16.93" fill="#262626"  stroke="#262626" stroke-width="0.12" textLength="53.30" lengthAdjust="spacingAndGlyphs">People</text><text x="319.70" y="714.00" font-size="16.93" fill="#262626"  stroke="#262626" stroke-width="0.12" textLength="108.40" lengthAdjust="spacingAndGlyphs">Shipping Cost</text><text x="462.00" y="713.50" font-size="16.93" fill="#262626"  stroke="#262626" stroke-width="0.12" textLength="52.50" lengthAdjust="spacingAndGlyphs">Orders</text><text x="546.00" y="709.70" font-size="18.03" fill="#1f1f1f"  stroke="#1f1f1f" stroke-width="0.45" textLength="141.50" lengthAdjust="spacingAndGlyphs">Pivot Calculations</text><rect x="546" y="717" width="141" height="2" fill="#1d6b3e" /><text x="720.00" y="713.50" font-size="16.93" fill="#262626"  stroke="#262626" stroke-width="0.12" textLength="155.00" lengthAdjust="spacingAndGlyphs">Dashboard Creation</text><text x="911.20" y="713.50" font-size="16.93" fill="#262626"  stroke="#262626" stroke-width="0.12" textLength="143.60" lengthAdjust="spacingAndGlyphs">Sales Dashboard C</text><g opacity="0.11" fill="none" stroke="#000" stroke-width="6" stroke-linecap="butt"><path d="M741.5,681 C741.5,697 746,703.5 757,703.5 H881"/><path d="M796.5,668 V703"/><path d="M822.8,681 V703"/><path d="M840,681 V703"/><path d="M859,680 V703"/><path d="M874.5,668 V690"/><path d="M881,670 H893.5"/><path d="M881,683 C893,681 896,687 894,695 C893,701 889,703.5 881,703.5"/><path d="M909,686.5 C918,680 936,684 938,697 V703.5 H878"/></g><g opacity="0.11" fill="#000"><rect x="755" y="669" width="6" height="6" transform="rotate(45 758 672)"/><rect x="768.5" y="669" width="6" height="6" transform="rotate(45 771.5 672)"/><rect x="919" y="669" width="6" height="6" transform="rotate(45 922 672)"/></g><circle cx="1069.5" cy="706" r="1.6" fill="#333"/><circle cx="1074.5" cy="706" r="1.6" fill="#333"/><circle cx="1079.5" cy="706" r="1.6" fill="#333"/><rect x="1107" y="705.5" width="14" height="1.5" fill="#333" /><rect x="1113.3" y="699.5" width="1.5" height="14" fill="#333" /><circle cx="1155" cy="701.5" r="1.5" fill="#333"/><circle cx="1155" cy="707" r="1.5" fill="#333"/><circle cx="1155" cy="712.5" r="1.5" fill="#333"/><rect x="1175" y="696" width="520" height="20" rx="10" fill="#f7f7f7"/><polygon points="1189.5,701 1189.5,712 1181,706.5" fill="#707070"/><rect x="1196" y="700.5" width="281" height="11.5" rx="5.75" fill="#707070"/></svg></body></html>
